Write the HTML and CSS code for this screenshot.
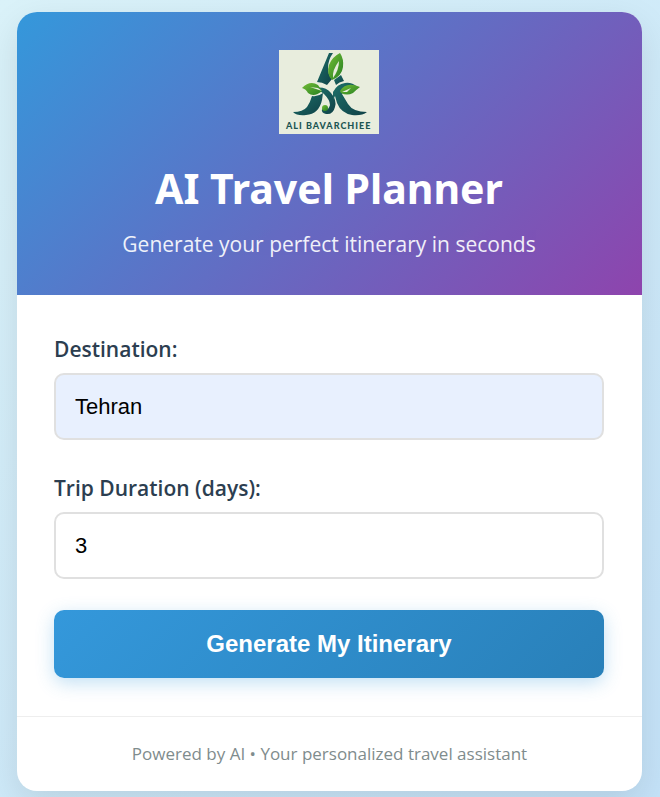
FILE: index.html
```html
<!DOCTYPE html>
<html lang="en">
<head>
<meta charset="utf-8">
<meta name="viewport" content="width=device-width, initial-scale=1">
<title>AI Travel Planner</title>
<link rel="stylesheet" href="styles.css">
</head>
<body>
<main class="card">
  <header class="header">
    <svg class="logo" viewBox="0 0 100 84" role="img" aria-label="Ali Bavarchiee">
      <defs>
        <linearGradient id="teal" x1="0" y1="0" x2="1" y2="1">
          <stop offset="0" stop-color="#1d7069"/>
          <stop offset="1" stop-color="#0f4147"/>
        </linearGradient>
        <linearGradient id="leaf" x1="0" y1="0" x2="1" y2="1">
          <stop offset="0" stop-color="#74bd36"/>
          <stop offset="1" stop-color="#258021"/>
        </linearGradient>
      </defs>
      <rect width="100" height="84" fill="#e8eddd"/>
      <g fill="url(#teal)">
        <path d="M50 3H54Q49 10 49 18Q49 25 53 29L48 35Q43 32 38 32Z"/>
        <path d="M55 30L62 25L65 31Q60 32 57 35Z"/>
        <path d="M33 46Q39 47 44 43L43 50Q40 64 27 65Q18 66 14 62Q24 62 28 57Q31 53 33 46Z"/>
        <path d="M36 38Q46 36 52 43Q58 50 56 57Q54 65 47 64Q42 63 43 59Q49 62 51 55Q51 50 45 44Q42 41 36 38Z"/>
        <path d="M54 42Q58 34 66 33Q73 32 78 37Q68 37 63 44L69 54Q74 62 88 62Q83 66 73 65Q62 63 58 53L56 46L54 50Z"/>
      </g>
      <g fill="url(#leaf)">
        <path d="M61 3Q65 9 64 17Q63 26 53 30Q47 24 50 15Q53 7 61 3Z"/>
        <path d="M23 38Q31 30 39 35L43 41Q35 48 29 43Q27 39 23 38Z"/>
        <path d="M61 41Q67 31 81 37Q77 40 74 43Q68 46 62 43Z"/>
        <circle cx="46" cy="58" r="3"/>
      </g>
      <path d="M54 28Q53 20 60 11Q60 20 54 28Z" fill="#e8eddd"/>
      <path d="M31 37L39 38L43 41L37 39ZM63 42L72 38L68 42Z" fill="#e8eddd"/>
      <text class="logo-text" x="7" y="79">ALI BAVARCHIEE</text>
    </svg>
    <h1 class="title">AI Travel Planner</h1>
    <p class="subtitle">Generate your perfect itinerary in seconds</p>
  </header>
  <form class="form">
    <div class="field">
      <label class="label" for="destination">Destination:</label>
      <input class="input input-filled" id="destination" type="text" value="Tehran">
    </div>
    <div class="field">
      <label class="label" for="duration">Trip Duration (days):</label>
      <input class="input" id="duration" type="number" min="1" value="3">
    </div>
    <button class="button" type="button">Generate My Itinerary</button>
  </form>
  <footer class="footer">Powered by AI • Your personalized travel assistant</footer>
</main>
</body>
</html>
```
FILE: styles.css
```css
* {
  box-sizing: border-box;
}

body {
  margin: 0;
  min-height: 100vh;
  padding: 12px 18px 6px 17px;
  background: linear-gradient(135deg, #daf2f9 0%, #c4e2f8 100%);
  font-family: "Open Sans", "Noto Sans", sans-serif;
  color: #2c3e50;
}

.card {
  max-width: 750px;
  margin: 0 auto;
  overflow: hidden;
  border-radius: 20px;
  background: #fff;
  box-shadow: 0 12px 36px rgba(0, 0, 0, 0.1);
}

.header {
  display: flex;
  flex-direction: column;
  align-items: center;
  padding: 38px 25px 33px 24px;
  background: linear-gradient(135deg, #3498db, #8e44ad);
  color: #fff;
  text-align: center;
}

.logo {
  width: 100px;
  height: 84px;
}

.logo-text {
  fill: #1c5552;
  font: 900 9px Lato, sans-serif;
  letter-spacing: 1px;
}

.title {
  margin: 24px 0 8px;
  font-family: "Noto Sans", sans-serif;
  font-size: 41px;
  font-weight: 700;
  line-height: 60px;
}

.subtitle {
  margin: 0;
  font-size: 21px;
  line-height: 36px;
  opacity: 0.9;
}

.form {
  display: flex;
  flex-direction: column;
  padding: 38px;
  padding-left: 37px;
}

.field {
  display: flex;
  flex-direction: column;
  gap: 8px;
}

.field + .field {
  margin-top: 32px;
}

.label {
  font-size: 21px;
  font-weight: 600;
  line-height: 32px;
}

.input {
  width: 100%;
  height: 67px;
  padding: 0 19px;
  border: 2px solid #e0e0e0;
  border-radius: 10px;
  background: #fff;
  color: #000;
  font: 22px "Liberation Sans", Arial, sans-serif;
}

.input-filled {
  background: #e8f0fe;
}

.button {
  height: 68px;
  margin-top: 31px;
  border: 0;
  border-radius: 10px;
  background: linear-gradient(135deg, #3498db, #2980b9);
  box-shadow: 0 5px 18px rgba(52, 152, 219, 0.3);
  color: #fff;
  font: bold 24px "Liberation Sans", Arial, sans-serif;
}

.footer {
  padding: 22px;
  border-top: 1px solid #eee;
  color: #7f8c8d;
  font-size: 17px;
  line-height: 30px;
  text-align: center;
}
```
